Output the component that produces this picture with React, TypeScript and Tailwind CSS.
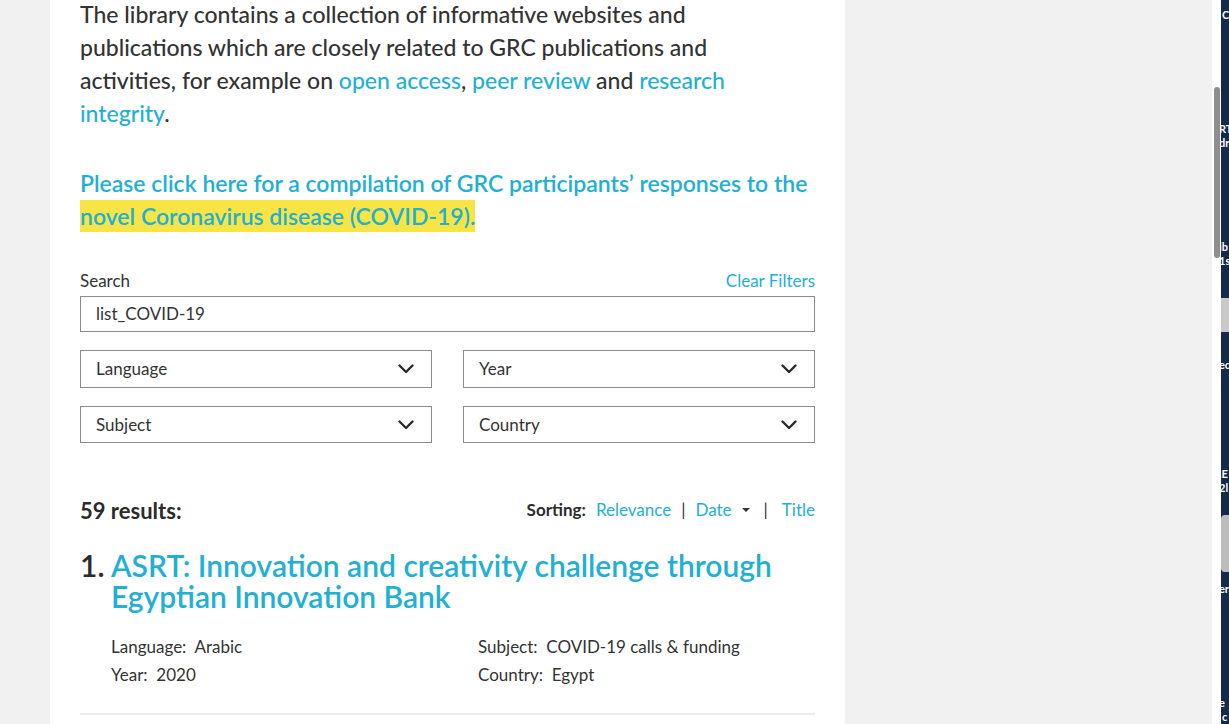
function Chevron() {
  return (
    <svg width="16" height="10" viewBox="0 0 16 10" className="shrink-0">
      <path d="M1.5 1.5 L8 8 L14.5 1.5" fill="none" stroke="#2a2a2a" strokeWidth="2.4" strokeLinecap="round" strokeLinejoin="round" />
    </svg>
  );
}

function Select({ label, tall }: { label: string; tall?: boolean }) {
  return (
    <div className={`flex items-center justify-between border border-[#8c8c8c] pl-[15px] pr-[17px] ${tall ? "h-[38px]" : "h-[37px]"}`}>
      <span className="text-[17px] text-[#333]">{label}</span>
      <Chevron />
    </div>
  );
}

export default function App() {
  const link = "text-[#22b0d2]";
  return (
    <div className="flex h-[724px] w-full overflow-hidden bg-[#f1f1f1] font-['Lato',sans-serif] text-[#333]">
      <div className="w-[50px] shrink-0" />
      <main className="w-[795px] shrink-0 bg-white px-[30px]">
        <p className="mt-[-2px] text-[23px] font-medium leading-[33px] text-[#333]">
          The library contains a collection of informative websites and
          <br />
          publications which are closely related to GRC publications and
          <br />
          activities, for example on <a className={link}>open access</a>, <a className={link}>peer review</a> and{" "}
          <a className={link}>research</a>
          <br />
          <a className={link}>integrity</a>.
        </p>
        <p className={`mt-[37px] text-[23px] font-semibold leading-[33px] ${link}`}>
          Please click here for a compilation of GRC participants’ responses to the
          <br />
          <span className="bg-[#f8e545] py-[2px]">novel Coronavirus disease (COVID-19).</span>
        </p>

        <div className="mt-[36px] flex items-center justify-between text-[17px] leading-[24px]">
          <span className="text-[#333]">Search</span>
          <a className={link}>Clear Filters</a>
        </div>
        <div className="mt-[3px] flex h-[36px] items-center border border-[#8c8c8c] px-[15px] text-[17px] text-[#333]">
          list_COVID-19
        </div>

        <div className="mt-[18px] grid grid-cols-2 gap-x-[31px] gap-y-[18px]">
          <Select label="Language" tall />
          <Select label="Year" tall />
          <Select label="Subject" />
          <Select label="Country" />
        </div>

        <div className="mt-[53px] flex h-[28px] items-center justify-between">
          <span className="text-[22px] font-bold text-[#2b2b2b]">59 results:</span>
          <div className="flex items-center text-[17px]">
            <span className="font-bold text-[#2b2b2b]">Sorting:</span>
            <a className={`${link} ml-[10px]`}>Relevance</a>
            <span className="mx-[10px] text-[#333]">|</span>
            <a className={`${link} flex items-center`}>
              Date
              <svg width="8" height="4" viewBox="0 0 8 4" className="ml-[10px]">
                <path d="M0 0 H8 L4 4 Z" fill="#333" />
              </svg>
            </a>
            <span className="mx-[14px] text-[#333]">|</span>
            <a className={link}>Title</a>
          </div>
        </div>

        <div className="mt-[26px] flex text-[30px] font-semibold leading-[31px]">
          <span className="w-[31px] shrink-0 text-[#2b2b2b]">1.</span>
          <a className={link}>ASRT: Innovation and creativity challenge through Egyptian Innovation Bank</a>
        </div>
        <div className="mt-[21px] ml-[31px] grid grid-cols-[367px_1fr] text-[17px] leading-[28px] text-[#333]">
          <span>Language:&nbsp; Arabic</span>
          <span>Subject:&nbsp; COVID-19 calls &amp; funding</span>
          <span>Year:&nbsp; 2020</span>
          <span>Country:&nbsp; Egypt</span>
        </div>
        <div className="mt-[24px] h-[2px] bg-[#ececec]" />
      </main>
      <div className="flex-1" />
      <div className="relative w-[9px] shrink-0 bg-white">
        <div className="absolute left-[1.5px] top-[87px] h-[171px] w-[6px] rounded-full bg-[#8e8e8e]" />
      </div>
      <div className="flex w-[8px] shrink-0 flex-col overflow-hidden bg-[#142a4c] text-[11px] font-bold leading-[14px] text-white">
        <span className="mt-[8px] ml-[1px]">C</span>
        <span className="mt-[100px] ml-[-2px]">RT</span>
        <span className="ml-[-2px]">dr</span>
        <span className="mt-[90px] ml-[-2px]">ib</span>
        <span className="ml-[-2px]">1s</span>
        <div className="mt-[30px] h-[36px] w-[8px] bg-[#c9c9c9]" />
        <span className="mt-[26px] ml-[-2px]">ec</span>
        <span className="mt-[95px] ml-[-2px]">.E</span>
        <span className="ml-[-2px]">2l</span>
        <div className="mt-[20px] h-[60px] w-[8px] rounded-l bg-[#bdbdbd]" />
        <span className="mt-[10px] ml-[-2px]">er</span>
        <span className="mt-[100px] ml-[-2px]">e</span>
        <span className="ml-[1px]">c</span>
      </div>
    </div>
  );
}
